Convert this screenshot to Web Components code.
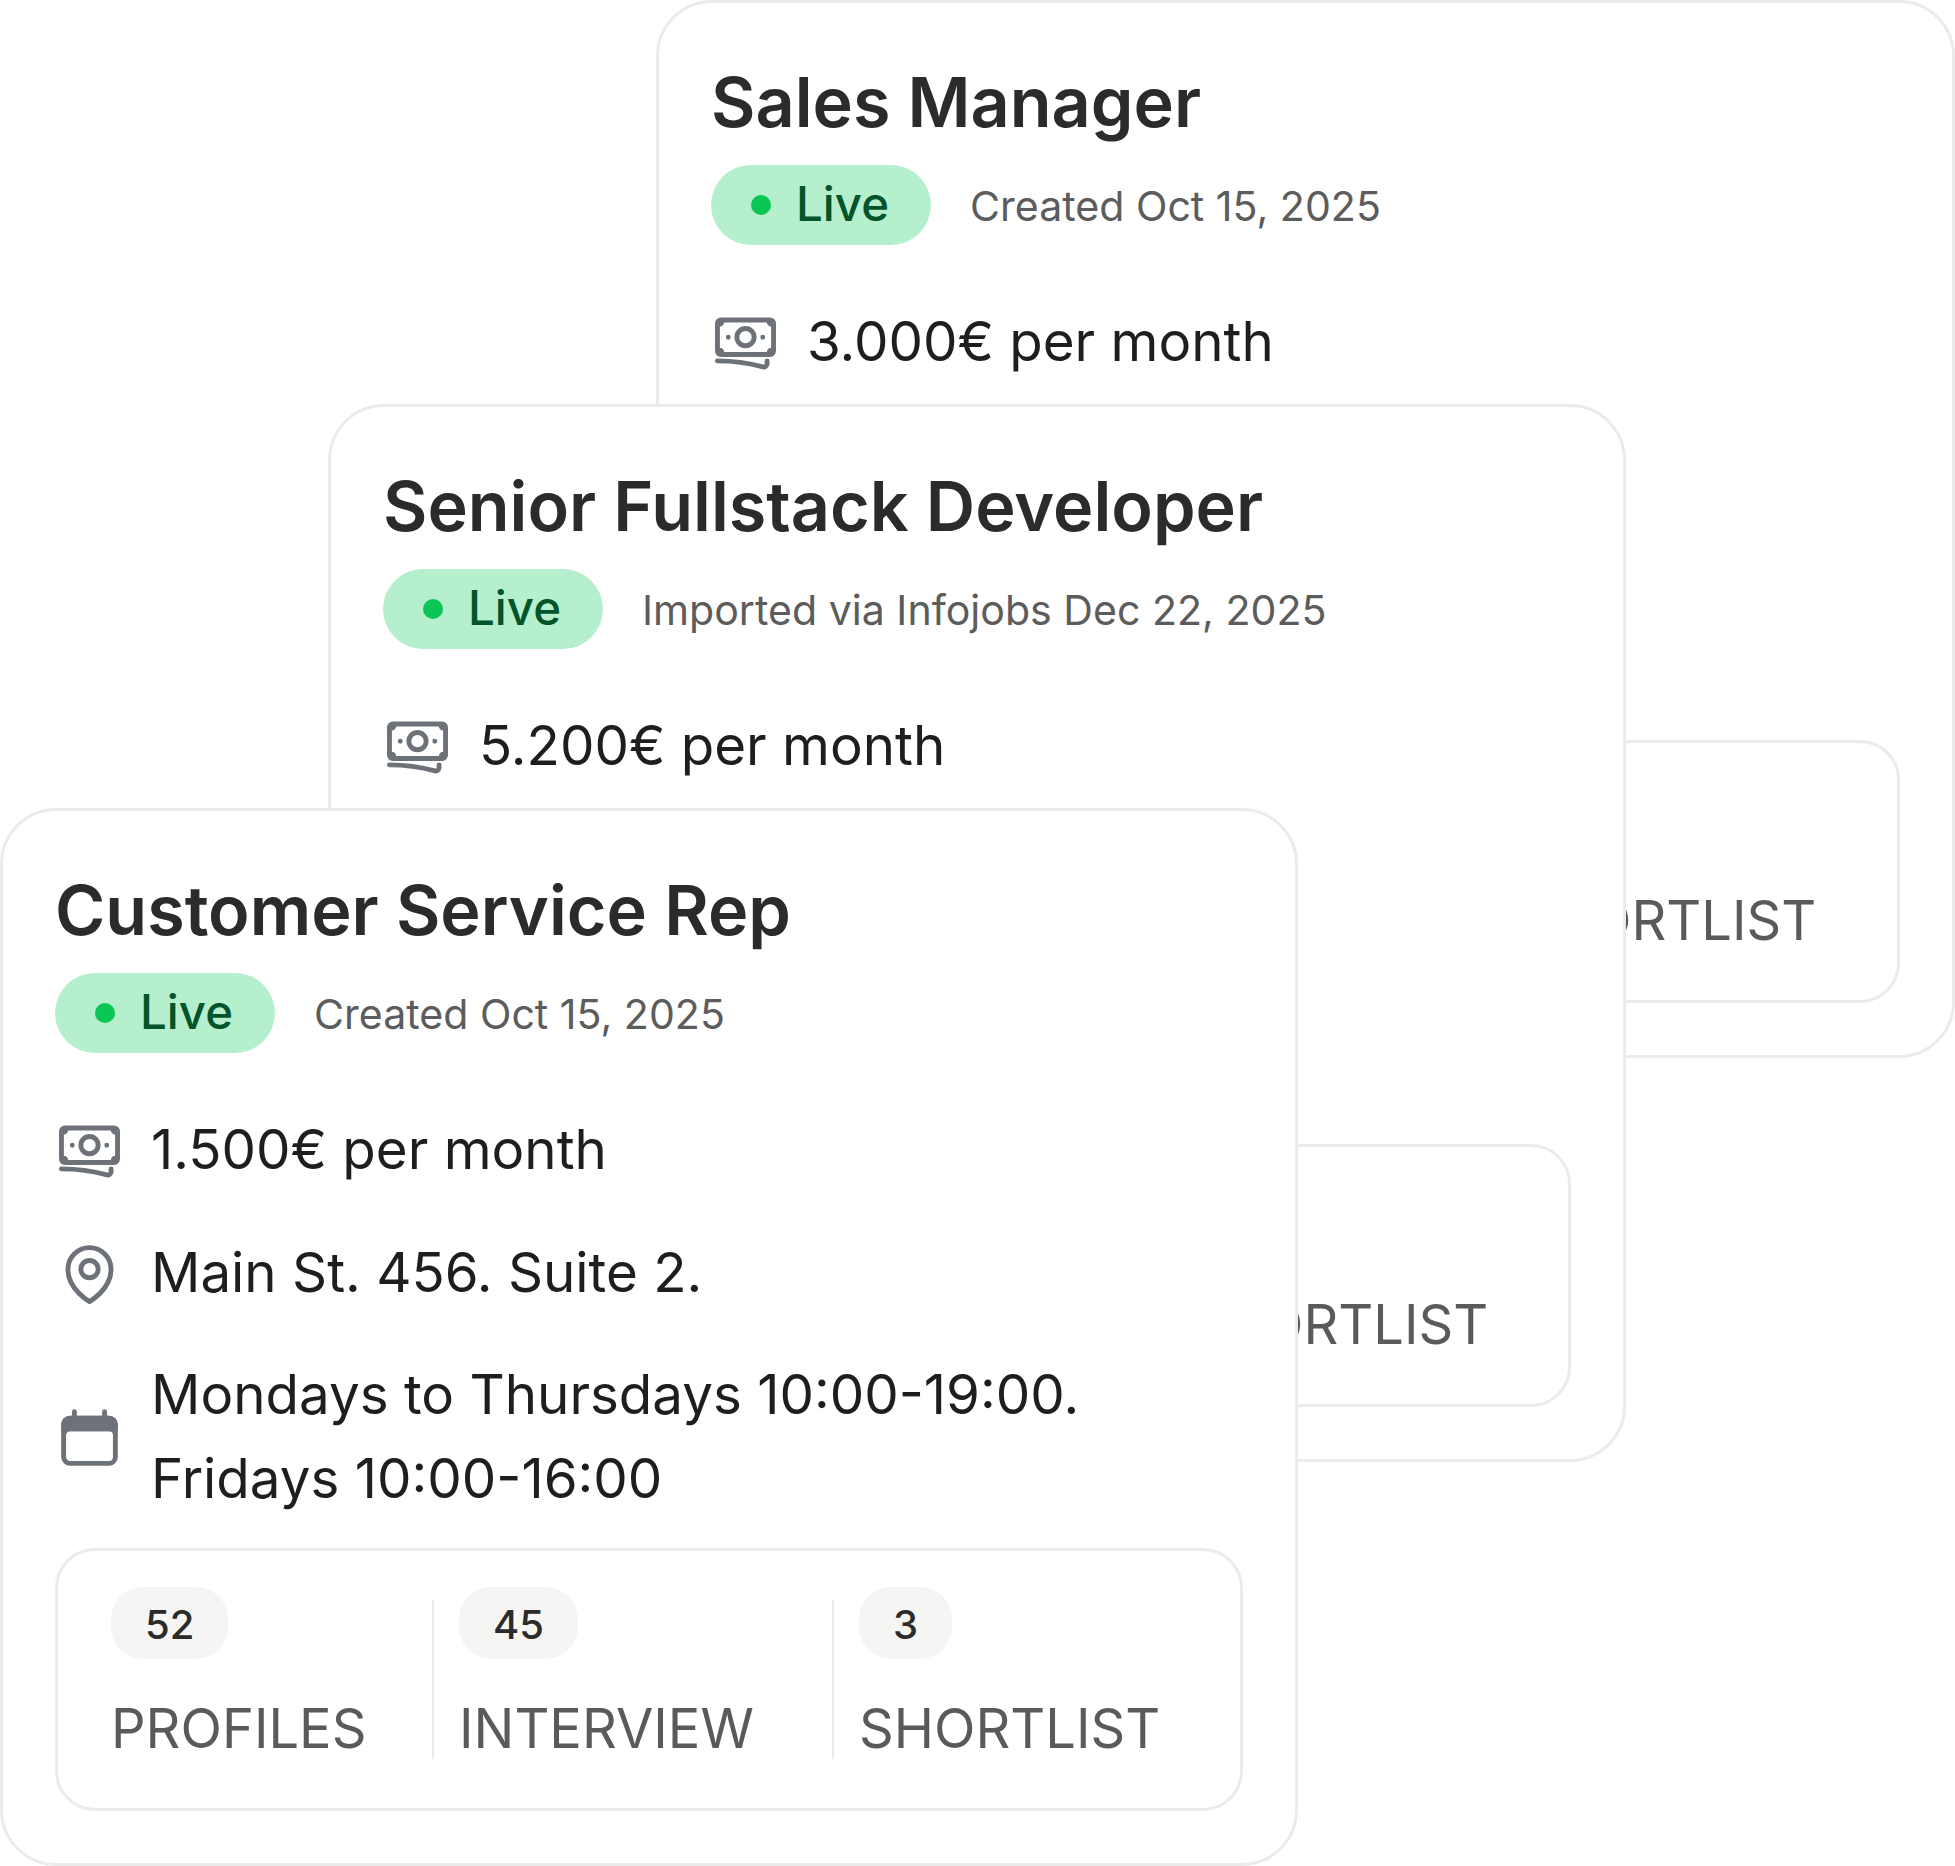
<!DOCTYPE html>
<html lang="en">
<head>
<meta charset="utf-8">
<title>Job cards</title>
<style>
  html, body { margin: 0; background: #fff; }
  body { font-family: Inter, "Noto Sans", sans-serif; overflow: hidden; }
</style>
</head>
<body>
<job-stack>
  <job-card>
    <span slot="title">Sales Manager</span>
    <span slot="meta">Created Oct 15, 2025</span>
    <job-row icon="money">3.000€ per month</job-row>
    <job-stats slot="stats">
      <job-stat></job-stat>
      <job-stat></job-stat>
      <job-stat>SHORTLIST</job-stat>
    </job-stats>
  </job-card>
  <job-card>
    <span slot="title">Senior Fullstack Developer</span>
    <span slot="meta">Imported via Infojobs Dec 22, 2025</span>
    <job-row icon="money">5.200€ per month</job-row>
    <job-stats slot="stats">
      <job-stat></job-stat>
      <job-stat></job-stat>
      <job-stat>SHORTLIST</job-stat>
    </job-stats>
  </job-card>
  <job-card>
    <span slot="title">Customer Service Rep</span>
    <span slot="meta">Created Oct 15, 2025</span>
    <job-row icon="money">1.500€ per month</job-row>
    <job-row icon="pin">Main St. 456. Suite 2.</job-row>
    <job-row icon="calendar">Mondays to Thursdays 10:00-19:00.<br>Fridays 10:00-16:00</job-row>
    <job-stats slot="stats">
      <job-stat count="52">PROFILES</job-stat>
      <job-stat count="45">INTERVIEW</job-stat>
      <job-stat count="3">SHORTLIST</job-stat>
    </job-stats>
  </job-card>
</job-stack>

<script>
const ICONS = {
  money: `<path d="M2.25 18.75a60.07 60.07 0 0 1 15.797 2.101c.727.198 1.453-.342 1.453-1.096V18.75M3.75 4.5v.75A.75.75 0 0 1 3 6h-.75m0 0v-.375c0-.621.504-1.125 1.125-1.125H20.25M2.25 6v9m18-10.5v.75c0 .414.336.75.75.75h.75m-1.5-1.5h.375c.621 0 1.125.504 1.125 1.125v9.75c0 .621-.504 1.125-1.125 1.125h-.375m1.5-1.5H21a.75.75 0 0 0-.75.75v.75m0 0H3.75m0 0h-.375a1.125 1.125 0 0 1-1.125-1.125V15m1.5 1.5v-.75A.75.75 0 0 0 3 15h-.75M15 10.5a3 3 0 1 1-6 0 3 3 0 0 1 6 0Zm3 0h.008v.008H18V10.5Zm-12 0h.008v.008H6V10.5Z"/>`,
  pin: `<path d="M15 10.5a3 3 0 1 1-6 0 3 3 0 0 1 6 0Z"/><path d="M19.5 10.5c0 7.142-7.5 11.25-7.5 11.25S4.5 17.642 4.5 10.5a7.5 7.5 0 1 1 15 0Z"/>`,
  calendar: `<path fill="currentColor" d="M3 9V7.5a2.25 2.25 0 0 1 2.25-2.25h13.5A2.25 2.25 0 0 1 21 7.5V9Z"/><path d="M6.75 3v2.25M17.25 3v2.25M3 18.75V7.5a2.25 2.25 0 0 1 2.25-2.25h13.5A2.25 2.25 0 0 1 21 7.5v11.25m-18 0A2.25 2.25 0 0 0 5.25 21h13.5A2.25 2.25 0 0 0 21 18.75m-18 0v-7.5A2.25 2.25 0 0 1 5.25 9h13.5A2.25 2.25 0 0 1 21 11.25v7.5"/>`
};

class JobStack extends HTMLElement {
  constructor() {
    super();
    this.shadowDOM = this.attachShadow({mode: 'open'});
  }
  connectedCallback() {
    this.shadowDOM.innerHTML = `
    <style>
    :host {
      display: grid;
      width: 1955px;
      height: 1866px;
    }
    ::slotted(job-card) { grid-area: 1 / 1; }
    ::slotted(job-card:nth-child(1)) { margin: 0 0 0 656px; width: 1299px; }
    ::slotted(job-card:nth-child(2)) { margin: 404px 0 0 328px; }
    ::slotted(job-card:nth-child(3)) { margin: 808px 0 0 0; }
    </style>
    <slot></slot>
    `;
  }
}

class JobCard extends HTMLElement {
  constructor() {
    super();
    this.shadowDOM = this.attachShadow({mode: 'open'});
  }
  connectedCallback() {
    this.shadowDOM.innerHTML = `
    <style>
    :host {
      display: flex;
      flex-direction: column;
      box-sizing: border-box;
      isolation: isolate;
      width: 1298px;
      height: 1058px;
      padding: 52px;
      background: #fff;
      border: 3px solid #ebebea;
      border-radius: 56px;
    }
    .title {
      font-size: 68.3px;
      font-weight: 600;
      line-height: 94px;
      color: #2b2b2b;
    }
    .status {
      display: flex;
      align-items: center;
      gap: 39px;
      margin-top: 16px;
    }
    .pill {
      display: flex;
      align-items: center;
      gap: 25px;
      box-sizing: border-box;
      width: 220px;
      height: 80px;
      padding-left: 40px;
      border-radius: 40px;
      background: #b5efcd;
      color: #03542a;
      font-size: 47.5px;
      font-weight: 500;
    }
    .pill b {
      font-weight: inherit;
      margin-top: -3px;
    }
    .dot {
      width: 20px;
      height: 20px;
      border-radius: 50%;
      background: #0ac655;
    }
    .meta {
      font-size: 41.1px;
      color: #5c5c5c;
      padding-top: 2px;
    }
    .rows {
      display: flex;
      flex-direction: column;
      gap: 38.5px;
      margin-top: 54px;
    }
    .stats { margin-top: auto; }
    </style>
    <div class="title"><slot name="title"></slot></div>
    <div class="status">
      <div class="pill"><span class="dot"></span><b>Live</b></div>
      <div class="meta"><slot name="meta"></slot></div>
    </div>
    <div class="rows"><slot></slot></div>
    <div class="stats"><slot name="stats"></slot></div>
    `;
  }
}

class JobRow extends HTMLElement {
  constructor() {
    super();
    this.shadowDOM = this.attachShadow({mode: 'open'});
  }
  connectedCallback() {
    this.shadowDOM.innerHTML = `
    <style>
    :host {
      display: flex;
      align-items: center;
      gap: 27px;
      font-size: 54.7px;
      line-height: 84px;
      color: #1e1e1e;
    }
    svg {
      flex: none;
      width: 69px;
      height: 69px;
      fill: none;
      color: #6d7178;
      stroke: currentColor;
      stroke-width: 1.7;
      stroke-linecap: round;
      stroke-linejoin: round;
    }
    :host([icon="pin"]) svg, :host([icon="calendar"]) svg { margin-top: 3px; }
    </style>
    <svg viewBox="0 0 24 24">${ICONS[this.getAttribute('icon')]}</svg>
    <div><slot></slot></div>
    `;
  }
}

class JobStats extends HTMLElement {
  constructor() {
    super();
    this.shadowDOM = this.attachShadow({mode: 'open'});
  }
  connectedCallback() {
    this.shadowDOM.innerHTML = `
    <style>
    :host {
      display: flex;
      box-sizing: border-box;
      height: 263px;
      padding: 36px 53px;
      border: 3px solid #ebebea;
      border-radius: 40px;
    }
    ::slotted(job-stat:nth-child(1)) { width: 321px; }
    ::slotted(job-stat:nth-child(2)) { width: 400px; }
    ::slotted(job-stat:nth-child(3)) { flex: 1; }
    </style>
    <slot></slot>
    `;
  }
}

class JobStat extends HTMLElement {
  constructor() {
    super();
    this.shadowDOM = this.attachShadow({mode: 'open'});
  }
  connectedCallback() {
    const count = this.getAttribute('count') || '';
    this.shadowDOM.innerHTML = `
    <style>
    :host {
      display: block;
      position: relative;
      box-sizing: border-box;
      font-size: 54.2px;
      line-height: 84px;
      color: #5a5a5a;
    }
    :host(:not(:first-child)) { padding-left: 27px; }
    :host(:not(:first-child))::before {
      content: "";
      position: absolute;
      left: 0;
      top: 13px;
      width: 2px;
      height: 159px;
      background: #ebebea;
    }
    .count {
      display: flex;
      align-items: center;
      width: max-content;
      height: 72px;
      margin-bottom: 27px;
      padding: 4px 34px 0;
      box-sizing: border-box;
      border-radius: 32px;
      background: #f5f5f4;
      color: #2b2b2b;
      font-size: 40px;
      line-height: 48px;
      font-weight: 500;
    }
    .count:empty { visibility: hidden; }
    </style>
    <div class="count">${count}</div>
    <slot></slot>
    `;
  }
}

customElements.define('job-stack', JobStack);
customElements.define('job-card', JobCard);
customElements.define('job-row', JobRow);
customElements.define('job-stats', JobStats);
customElements.define('job-stat', JobStat);
</script>
</body>
</html>
